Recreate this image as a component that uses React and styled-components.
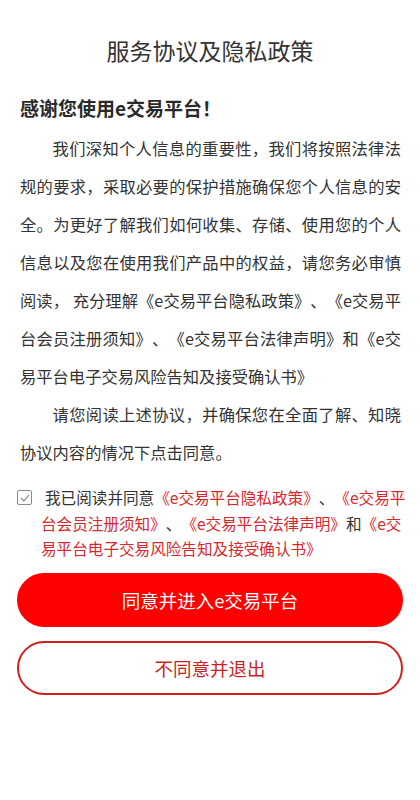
import React, { useState } from "react";
import styled, { createGlobalStyle } from "styled-components";

const GlobalStyle = createGlobalStyle`
  html, body {
    margin: 0;
    padding: 0;
    background: #fff;
  }
  body {
    font-family: "Noto Sans CJK SC", "Noto Sans", sans-serif;
    text-spacing-trim: space-all;
  }
`;

const Page = styled.div`
  width: 420px;
  min-height: 800px;
  box-sizing: border-box;
  padding-top: 32px;
  background: #fff;
`;

const Title = styled.h1`
  margin: 0;
  font-size: 23px;
  line-height: 36px;
  font-weight: 400;
  color: #333;
  text-align: center;
`;

const Content = styled.div`
  padding: 0 19px 0 20px;
  margin-top: 25px;
`;

const Heading = styled.h2`
  margin: 0 0 6px;
  font-size: 19px;
  line-height: 30px;
  font-weight: 700;
  color: #2a2a2a;
`;

const Paragraph = styled.p`
  margin: 0;
  font-size: 16.3px;
  line-height: 38px;
  color: #333;
  text-indent: 2em;
  text-align: justify;
`;

const Agreement = styled.label`
  display: flex;
  align-items: flex-start;
  margin: 14px 0 0 17px;
  cursor: pointer;
`;

const Box = styled.span`
  flex: none;
  width: 13px;
  height: 13px;
  margin-top: 5px;
  border: 1px solid #8a8a8a;
  border-radius: 2px;
  display: flex;
  align-items: center;
  justify-content: center;
  background: #fff;
`;

const AgreementText = styled.span`
  width: 370px;
  margin-left: 9px;
  font-size: 15.6px;
  line-height: 25.5px;
  color: #333;
  text-indent: 4px;
`;

const DocLink = styled.a`
  color: #d8282c;
  text-decoration: none;
`;

const Buttons = styled.div`
  display: flex;
  flex-direction: column;
  gap: 14px;
  padding: 0 17px;
  margin-top: 11px;
`;

const Button = styled.button`
  height: 54px;
  border-radius: 27px;
  box-sizing: border-box;
  font-family: inherit;
  font-size: 18.5px;
  cursor: pointer;
  border: 2px solid ${(p) => (p.$primary ? "#fe0000" : "#d11f1f")};
  background: ${(p) => (p.$primary ? "#fe0000" : "#fff")};
  color: ${(p) => (p.$primary ? "#fff" : "#cc1f1f")};
`;

const docs = [
  "《e交易平台隐私政策》",
  "《e交易平台会员注册须知》",
  "《e交易平台法律声明》",
  "《e交易平台电子交易风险告知及接受确认书》",
];

export default function App() {
  const [checked, setChecked] = useState(true);

  return (
    <Page>
      <GlobalStyle />
      <Title>服务协议及隐私政策</Title>
      <Content>
        <Heading>感谢您使用e交易平台！</Heading>
        <Paragraph>
          我们深知个人信息的重要性，我们将按照法律法规的要求，采取必要的保护措施确保您个人信息的安全。为更好了解我们如何收集、存储、使用您的个人信息以及您在使用我们产品中的权益，请您务必审慎阅读，
          充分理解{docs[0]}、{docs[1]}、{docs[2]}和{docs[3]}
        </Paragraph>
        <Paragraph>
          请您阅读上述协议，并确保您在全面了解、知晓协议内容的情况下点击同意。
        </Paragraph>
      </Content>
      <Agreement onClick={() => setChecked(!checked)}>
        <Box>
          {checked && (
            <svg width="10" height="8" viewBox="0 0 10 8">
              <path
                d="M1 4.2 L3.8 7 L9 1"
                fill="none"
                stroke="#777"
                strokeWidth="1.1"
              />
            </svg>
          )}
        </Box>
        <AgreementText>
          我已阅读并同意<DocLink>{docs[0]}</DocLink>、<DocLink>{docs[1]}</DocLink>、
          <DocLink>{docs[2]}</DocLink>和<DocLink>{docs[3]}</DocLink>
        </AgreementText>
      </Agreement>
      <Buttons>
        <Button $primary>同意并进入e交易平台</Button>
        <Button>不同意并退出</Button>
      </Buttons>
    </Page>
  );
}
